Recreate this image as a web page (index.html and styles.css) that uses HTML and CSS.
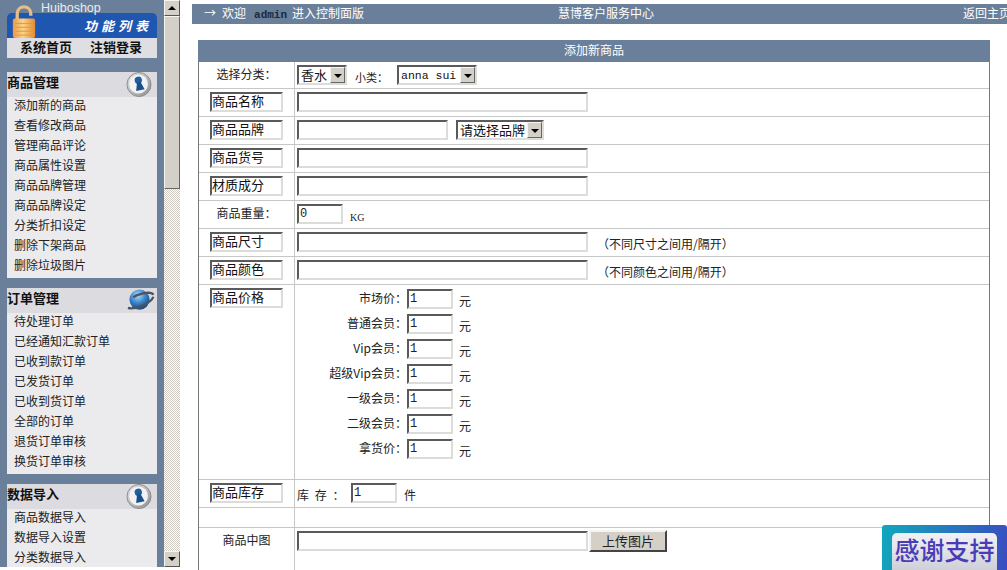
FILE: index.html
```html
<!DOCTYPE html>
<html lang="zh">
<head>
<meta charset="utf-8">
<title>添加新商品</title>
<link rel="stylesheet" href="styles.css">
</head>
<body>
<div class="page">
  <aside class="sidebar">
    <div class="brand">Huiboshop</div>
    <svg class="lock" viewBox="0 0 24 34" aria-hidden="true">
      <defs>
        <linearGradient id="body" x1="0" y1="0" x2="1" y2="0">
          <stop offset="0" stop-color="#e89a48"/><stop offset="0.45" stop-color="#fbd488"/><stop offset="1" stop-color="#e08a30"/>
        </linearGradient>
      </defs>
      <path d="M5 15V9c0-4 3-7 7-7s7 3 7 7v2" fill="none" stroke="#e6bd84" stroke-width="3.4"/>
      <rect x="0.5" y="14" width="23" height="20" rx="2" fill="url(#body)"/>
      <path d="M3 19h18M3 23h18M3 27h18M3 31h18" stroke="#e0983c" stroke-width="1"/>
    </svg>
    <div class="logo-bar"><span class="logo-title">功能列表</span></div>
    <nav class="top-links"><span>系统首页</span><span>注销登录</span></nav>

    <section class="menu">
      <h3 class="menu-head">商品管理
        <svg class="badge" viewBox="0 0 26 26" aria-hidden="true">
          <defs>
            <linearGradient id="rim" x1="0" y1="0" x2="1" y2="1">
              <stop offset="0" stop-color="#e8e8e8"/><stop offset="1" stop-color="#8c8c8c"/>
            </linearGradient>
          </defs>
          <circle cx="13" cy="13" r="12.5" fill="url(#rim)" stroke="#8a8a8a"/>
          <circle cx="12.500" cy="12.500" r="9.800" fill="#f2f2f5"/>
          <g transform="rotate(-12 13 12)">
            <circle cx="13" cy="8.500" r="3.800" fill="#1f5f9e"/>
            <path d="M11.200 10.500l-2.700 8.500h9l-2.700-8.500z" fill="#17508c"/>
          </g>
        </svg>
      </h3>
      <ul class="menu-list">
        <li>添加新的商品</li><li>查看修改商品</li><li>管理商品评论</li><li>商品属性设置</li><li>商品品牌管理</li><li>商品品牌设定</li><li>分类折扣设定</li><li>删除下架商品</li><li>删除垃圾图片</li>
      </ul>
    </section>

    <section class="menu">
      <h3 class="menu-head">订单管理
        <svg class="planet" viewBox="0 0 32 26" aria-hidden="true">
          <defs>
            <radialGradient id="globe" cx="0.42" cy="0.3" r="0.75">
              <stop offset="0" stop-color="#b4dcf5"/><stop offset="0.5" stop-color="#3a84cc"/><stop offset="1" stop-color="#123d78"/>
            </radialGradient>
          </defs>
          <circle cx="16" cy="12" r="10.500" fill="url(#globe)"/>
          <ellipse cx="16" cy="13" rx="15.500" ry="6" transform="rotate(-22 16 13)" fill="none" stroke="#4a5462" stroke-width="2.400" stroke-dasharray="30 16 60" stroke-dashoffset="-2"/>
        </svg>
      </h3>
      <ul class="menu-list">
        <li>待处理订单</li><li>已经通知汇款订单</li><li>已收到款订单</li><li>已发货订单</li><li>已收到货订单</li><li>全部的订单</li><li>退货订单审核</li><li>换货订单审核</li>
      </ul>
    </section>

    <section class="menu">
      <h3 class="menu-head">数据导入
        <svg class="badge" viewBox="0 0 26 26" aria-hidden="true">
          <circle cx="13" cy="13" r="12.5" fill="url(#rim)" stroke="#8a8a8a"/>
          <circle cx="12.500" cy="12.500" r="9.800" fill="#f2f2f5"/>
          <g transform="rotate(-12 13 12)">
            <circle cx="13" cy="8.500" r="3.800" fill="#1f5f9e"/>
            <path d="M11.200 10.500l-2.700 8.500h9l-2.700-8.500z" fill="#17508c"/>
          </g>
        </svg>
      </h3>
      <ul class="menu-list">
        <li>商品数据导入</li><li>数据导入设置</li><li>分类数据导入</li>
      </ul>
    </section>
  </aside>

  <div class="scrollbar" aria-hidden="true">
    <div class="sb-btn"><i class="tri-up"></i></div>
    <div class="sb-thumb"></div>
    <div class="sb-track"></div>
    <div class="sb-btn"><i class="tri-down"></i></div>
  </div>

  <main class="main">
    <header class="topbar">
      <div class="tb-left"><span class="arrow">→</span>欢迎<b class="admin">admin</b>进入控制面版</div>
      <div class="tb-center">慧博客户服务中心</div>
      <div class="tb-right">返回主页</div>
    </header>

    <div class="panel">
      <div class="panel-title">添加新商品</div>

      <div class="row row-first">
        <div class="cell-l center">选择分类：</div>
        <div class="cell-r">
          <span class="sel sel-a"><span class="sel-text">香水</span><i class="sel-btn"></i></span>
          <span class="sub-label">小类：</span>
          <span class="sel sel-b"><span class="sel-text latin">anna sui</span><i class="sel-btn"></i></span>
        </div>
      </div>

      <div class="row"><div class="cell-l"><span class="tag">商品名称</span></div><div class="cell-r"><input class="inp inp-l" type="text"></div></div>

      <div class="row"><div class="cell-l"><span class="tag">商品品牌</span></div>
        <div class="cell-r"><input class="inp inp-m" type="text"><span class="sel sel-c"><span class="sel-text">请选择品牌</span><i class="sel-btn"></i></span></div></div>

      <div class="row"><div class="cell-l"><span class="tag">商品货号</span></div><div class="cell-r"><input class="inp inp-l" type="text"></div></div>
      <div class="row"><div class="cell-l"><span class="tag">材质成分</span></div><div class="cell-r"><input class="inp inp-l" type="text"></div></div>

      <div class="row"><div class="cell-l center">商品重量：</div><div class="cell-r"><input class="inp inp-s" type="text" value="0"><span class="kg">KG</span></div></div>

      <div class="row"><div class="cell-l"><span class="tag">商品尺寸</span></div><div class="cell-r"><input class="inp inp-l" type="text"><span class="hint">（不同尺寸之间用/隔开）</span></div></div>
      <div class="row"><div class="cell-l"><span class="tag">商品颜色</span></div><div class="cell-r"><input class="inp inp-l" type="text"><span class="hint">（不同颜色之间用/隔开）</span></div></div>

      <div class="row row-price">
        <div class="cell-l"><span class="tag">商品价格</span></div>
        <div class="cell-r price-grid">
          <span class="p-label">市场价：</span><input class="inp inp-s" type="text" value="1"><span class="p-unit">元</span>
          <span class="p-label">普通会员：</span><input class="inp inp-s" type="text" value="1"><span class="p-unit">元</span>
          <span class="p-label">Vip会员：</span><input class="inp inp-s" type="text" value="1"><span class="p-unit">元</span>
          <span class="p-label">超级Vip会员：</span><input class="inp inp-s" type="text" value="1"><span class="p-unit">元</span>
          <span class="p-label">一级会员：</span><input class="inp inp-s" type="text" value="1"><span class="p-unit">元</span>
          <span class="p-label">二级会员：</span><input class="inp inp-s" type="text" value="1"><span class="p-unit">元</span>
          <span class="p-label">拿货价：</span><input class="inp inp-s" type="text" value="1"><span class="p-unit">元</span>
        </div>
      </div>

      <div class="row"><div class="cell-l"><span class="tag">商品库存</span></div>
        <div class="cell-r"><span class="stock-label">库 存 ：</span><input class="inp inp-s" type="text" value="1"><span class="stock-unit">件</span></div></div>

      <div class="row row-blank"><div class="cell-l"></div><div class="cell-r"></div></div>

      <div class="row row-last"><div class="cell-l center img-label">商品中图</div>
        <div class="cell-r"><input class="inp inp-l" type="text"><button class="upload" type="button">上传图片</button></div></div>
    </div>
  </main>

  <div class="thanks"><span class="thanks-inner">感谢支持</span></div>
</div>
</body>
</html>
```
FILE: styles.css
```css
* { box-sizing: border-box; }
html, body { margin: 0; padding: 0; height: 100%; overflow: hidden; background: #fff; }
body { font: 12px/16px "Noto Sans CJK SC", "Liberation Sans", sans-serif; color: #222; }
.page { position: relative; display: flex; align-items: flex-start; width: 1007px; height: 570px; overflow: hidden; }

/* Sidebar */
.sidebar { position: relative; flex: 0 0 164px; height: 567px; padding: 0 7px; overflow: hidden; background: #6a7f99; }
.brand { height: 13px; padding-left: 34px; font: 12.5px/16px "Liberation Sans", sans-serif; color: #e8edf3; white-space: nowrap; }
.lock { position: absolute; left: 12px; top: 5px; width: 24px; height: 33px; }
.logo-bar { display: flex; justify-content: flex-end; align-items: center; height: 25px; padding-right: 9px; border-radius: 5px 5px 0 0; background: #1f56b0; }
.logo-title { font-size: 13px; font-weight: 700; font-style: italic; letter-spacing: 4px; color: #fff; margin-right: -4px; }
.top-links { display: flex; gap: 18px; height: 20px; padding: 0 0 0 13px; margin-bottom: 14px; background: #dfdfe3; font-size: 13px; line-height: 18px; font-weight: 700; color: #111; white-space: nowrap; }
.menu { margin-bottom: 10px; background: #ebebee; }
.menu-head { position: relative; height: 25px; margin: 0; background: #dcdce0; font-size: 13px; line-height: 20px; font-weight: 700; color: #111; }
.badge { position: absolute; right: 5px; top: 0; width: 26px; height: 25px; }
.planet { position: absolute; right: 2px; top: 0; width: 31px; height: 25px; }
.menu-list { margin: 0; padding: 0 0 1px 7px; list-style: none; }
.menu-list li { height: 20px; line-height: 16px; color: #222; white-space: nowrap; }

/* Fake scrollbar */
.scrollbar { display: flex; flex-direction: column; flex: 0 0 16px; height: 567px; }
.sb-btn { display: flex; align-items: center; justify-content: center; flex: 0 0 16px; border: 1px solid; border-color: #f4f4f0 #555 #555 #f4f4f0; background: #d4d0c8; }
.sb-thumb { flex: 0 0 173px; border: 1px solid; border-color: #f4f4f0 #666 #666 #f4f4f0; background: #d4d0c8; }
.sb-track { flex: 1; background: repeating-conic-gradient(#cfcbc3 0 25%, #fff 0 50%) 0 0 / 2px 2px; }
.tri-up { border: 4px solid transparent; border-top: 0; border-bottom-color: #000; }
.tri-down { border: 4px solid transparent; border-bottom: 0; border-top-color: #000; }

/* Main */
.main { flex: 1; min-width: 0; margin-left: 12px; padding-top: 4px; }
.topbar { display: flex; height: 20px; background: #6a7f99; color: #fff; line-height: 18px; white-space: nowrap; overflow: hidden; }
.tb-left { flex: 0 0 366px; padding-left: 12px; }
.arrow { margin-right: 6px; }
.admin { margin: 0 5px 0 8px; font: 700 11px/18px "Liberation Mono", monospace; color: #1b2a3c; }
.tb-center { flex: 0 0 405px; }
.tb-right { flex: 0 0 52px; }

.panel { width: 792px; margin: 16px 0 0 6px; border-right: 1px solid #777; border-left: 1px solid #777; }
.panel-title { height: 22px; margin: 0 -1px; background: #6a7f99; color: #fff; text-align: center; line-height: 20px; }
.row { display: flex; height: 28px; border-bottom: 1px solid #c6c8c8; }
.row-first { height: 27px; padding: 0; }
.row-price { height: 195px; }
.row-blank { height: 20px; }
.row-last { height: 60px; border-bottom: 0; }
.cell-l { flex: 0 0 96px; padding: 3px 0 0 11px; border-right: 1px solid #c6c8c8; }
.cell-l.center { padding: 4px 0 0; text-align: center; line-height: 16px; font-family: "Noto Sans CJK TC", "Noto Sans CJK SC", sans-serif; }
.img-label { padding-top: 0; }
.cell-r { display: flex; align-items: flex-start; flex: 1; padding: 3px 0 0 2px; }
.tag { display: block; width: 73px; height: 20px; padding-left: 0; border: 2px solid; border-color: #5a5a5a #dcdcd8 #dcdcd8 #5a5a5a; font-size: 13px; line-height: 14px; color: #111; }
.inp { display: block; height: 20px; padding: 0 0 0 1px; border: 2px solid; border-color: #5a5a5a #dcdcd8 #dcdcd8 #5a5a5a; border-radius: 0; background: #fff; font: 12px/14px "Liberation Mono", monospace; color: #222; outline: 0; }
.inp-l { width: 291px; }
.inp-m { width: 151px; }
.inp-s { width: 46px; }
.sel { display: inline-flex; align-items: stretch; height: 20px; border: 2px solid; border-color: #5a5a5a #dcdcd8 #dcdcd8 #5a5a5a; background: #fff; }
.sel-text { flex: 1; padding-left: 2px; font-size: 13px; line-height: 15px; color: #111; white-space: nowrap; }
.sel-text.latin { font: 11.5px/18px "Liberation Mono", monospace; }
.sel-btn { position: relative; flex: 0 0 15px; margin: 0; background: #d4d0c8; border: 1px solid; border-color: #f4f4f0 #666 #666 #f4f4f0; }
.sel-btn::after { content: ""; position: absolute; left: 3px; top: 6px; border: 4px solid transparent; border-bottom: 0; border-top-color: #000; }
.sel-a { width: 50px; }
.sel-b { width: 80px; }
.sel-c { width: 88px; margin-left: 8px; }
.sub-label { margin: 4px 9px 0 8px; width: 33px; font-size: 11px; white-space: nowrap; font-family: "Noto Sans CJK TC", "Noto Sans CJK SC", sans-serif; }
.kg { margin: 6px 0 0 7px; font: 10px/16px "Liberation Serif", serif; }
.hint { margin: 4px 0 0 9px; font-size: 12px; line-height: 16px; white-space: nowrap; }
.price-grid { display: grid; grid-template-columns: 110px 46px auto; grid-auto-rows: 25px; padding-top: 4px; align-content: start; }
.p-label { text-align: right; line-height: 18px; white-space: nowrap; font-family: "Noto Sans CJK TC", "Noto Sans CJK SC", sans-serif; }
.p-unit { margin: 4px 0 0 6px; line-height: 16px; }
.stock-label { width: 54px; margin-top: 4px; line-height: 16px; word-spacing: 3px; white-space: pre; font-family: "Noto Sans CJK TC", "Noto Sans CJK SC", sans-serif; }
.stock-unit { margin: 4px 0 0 7px; line-height: 16px; }
.upload { width: 78px; height: 22px; margin: -1px 0 0 1px; padding: 0; border: 2px solid; border-color: #f4f4f0 #444 #444 #f4f4f0; background: #d4d0c8; font: 13px/16px "Noto Sans CJK SC", sans-serif; color: #222; }

/* Overlay badge */
.thanks { position: absolute; left: 882px; top: 525px; width: 125px; height: 45px; padding: 8px 10px 0; border-radius: 3px 3px 0 0; background: linear-gradient(100deg, #10a8bc, #3a4cc0); }
.thanks-inner { display: block; height: 37px; border-radius: 5px 5px 0 0; background: linear-gradient(#f2f2f6, #cfcfd8); font-size: 25px; font-weight: 500; line-height: 33px; color: #4a3cb8; text-align: center; white-space: nowrap; }
```
